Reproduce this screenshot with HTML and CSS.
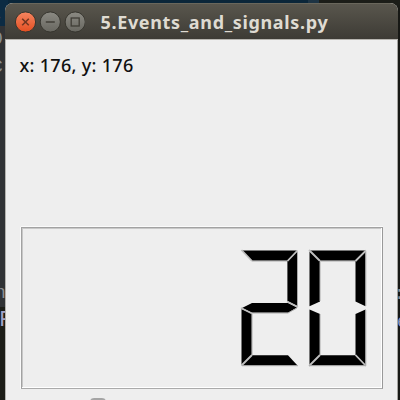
FILE: index.html
```
<!DOCTYPE html>
<html lang="en">
<head>
<meta charset="utf-8">
<title>5.Events_and_signals.py</title>
<link rel="stylesheet" href="styles.css">
</head>
<body>
<div class="desktop">
  <div class="behind left">
    <span class="scrap s1">-:</span>
    <span class="scrap s2">0:</span>
    <span class="scrap s3">C:</span>
    <span class="scrap s4">n</span>
    <span class="scrap s5">F</span>
  </div>
  <div class="behind right">
    <span class="scrap s6">:</span>
    <span class="scrap s7">e</span>
  </div>
  <main class="window">
    <header class="titlebar">
      <svg class="buttons" width="72" height="24" viewBox="0 0 72 24">
        <defs>
          <linearGradient id="red" x2="0" y2="1"><stop offset="0" stop-color="#f58560"/><stop offset="1" stop-color="#e44f22"/></linearGradient>
          <linearGradient id="grey" x2="0" y2="1"><stop offset="0" stop-color="#8b8a83"/><stop offset="1" stop-color="#686760"/></linearGradient>
        </defs>
        <g stroke="#37362f">
          <circle cx="12.5" cy="12" r="10.1" fill="url(#red)"/>
          <circle cx="37.3" cy="12" r="10.1" fill="url(#grey)"/>
          <circle cx="62.2" cy="12" r="10.1" fill="url(#grey)"/>
        </g>
        <g fill="none" stroke="#403e37" stroke-width="1.3">
          <path d="M9.2 8.7l6.6 6.6M15.8 8.7l-6.6 6.6" stroke="#733621" stroke-width="1.6"/>
          <path d="M32.8 12h9"/>
          <rect x="58.2" y="8" width="8" height="8"/>
        </g>
      </svg>
      <h1 class="title">5.Events_and_signals.py</h1>
    </header>
    <section class="content">
      <p class="coords">x: 176, y: 176</p>
      <div class="lcd">
        <svg class="digits" width="128" height="120" viewBox="240 248 128 120">
          <g class="segment">
            <path d="M241.5 250.5H297L287.5 260.8H252z"/>
            <path d="M297.2 251.5V306L287.4 301V261z"/>
            <path d="M242 308L252 303H288L297 307.5L288 312.8H252z"/>
            <path d="M241.5 309L251.8 313.5V355L241.5 365z"/>
            <path d="M241.5 365.5L252 355.3H288L297.5 365.5z"/>
            <path d="M309.5 250.5H365.5L355.5 260.8H320z"/>
            <path d="M309.5 251.5L320 261V301.5L309.5 306.3z"/>
            <path d="M365.5 251.5V306.3L355.5 301.5V261z"/>
            <path d="M309.5 309.5L320 314V355L309.5 365z"/>
            <path d="M365.5 309.5V365L355.5 355V314z"/>
            <path d="M309.5 365.5L320 355.3H355.5L365.5 365.5z"/>
          </g>
          <path class="light" d="M241.5 250L252 261M287.5 261L297.5 250.5M287 301.5L298 307M241 308L252 313.5M241.5 365.5L252 355M309 250L320 261M355.5 261L366 250.5M309 366L320 355M355.5 355L366 366"/>
          <path class="shade" d="M252 261H287M297.5 252V306M251.5 313H288L297 308M252 314V355M242 365.7H298M320 261H355M320 262V301M365.8 252V306M365.8 310V365M320 314V355M309 365.7H366"/>
        </svg>
      </div>
      <span class="handle"></span>
    </section>
  </main>
</div>
</body>
</html>
```

FILE: styles.css
```
* { box-sizing: border-box; }
body { margin: 0; background: #1b1c18; }
.desktop {
  position: relative;
  width: 400px;
  height: 400px;
  overflow: hidden;
  padding: 3px 2px 0 5px;
  background: linear-gradient(90deg, #0b2639 308px, #1e3444 308px 319px, #1c1d18 319px) 0 0 / 100% 5px no-repeat, #1a1b17;
}
.behind { position: absolute; top: 0; bottom: 0; overflow: hidden; }
.left {
  left: 0;
  width: 8px;
  background: linear-gradient(#0c2b43 26px, #303235 26px 307px, #1c1d17 307px);
}
.right { right: 0; top: 8px; width: 3px; background: #171815; }
.scrap {
  position: absolute;
  font: 18px/20px "Liberation Mono", monospace;
  color: #8b8e91;
  white-space: nowrap;
}
.s1 { left: -8px; top: 8px; }
.s2 { left: -8px; top: 29px; }
.s3 { left: -8px; top: 57px; }
.s4 { left: -5px; top: 283px; }
.s5 { left: -1px; top: 311px; color: #a2a3c9; font-size: 22px; }
.s6 { left: -3px; top: 276px; }
.s7 { left: 0; top: 304px; color: #9293be; }
.window {
  position: relative;
  height: 397px;
  border-radius: 8px 8px 0 0;
  overflow: hidden;
  background: #eee;
}
.titlebar {
  display: flex;
  align-items: center;
  height: 37px;
  padding-left: 8px;
  background: linear-gradient(#59564d, #3d3b35);
  border-top: 1px solid #6a675c;
  border-bottom: 1px solid #b7b5b0;
}
.buttons { display: block; flex: none; margin-top: 1px; }
.title {
  margin: 0 0 0 15.5px;
  font: bold 18px/24px "Noto Sans", sans-serif;
  letter-spacing: .66px;
  color: #dfdbd2;
  white-space: nowrap;
}
.content {
  height: 360px;
  padding: 12px 14px 0 15px;
  border-left: 1px solid #b3b2ae;
  border-right: 1px solid #a5a4a0;
}
.coords {
  margin: 0 0 0 -1.5px;
  height: 175px;
  font: 500 18px/26px "Noto Sans", sans-serif;
  letter-spacing: .3px;
  color: #111;
  white-space: nowrap;
}
.lcd {
  display: flex;
  justify-content: flex-end;
  height: 162px;
  padding: 20px 14px 0 0;
  border: 1px solid #a2a2a2;
  border-right-color: #999;
  border-bottom-color: #aaa;
  box-shadow: inset -1px -1px #fff, inset 1px 1px #c8c8c8, 0 -1px #fafafa, -1px 0 #fafafa;
}
.digits { display: block; }
.segment { fill: #000; }
.light, .shade { fill: none; stroke: #aaa; }
.light { stroke: #bebebe; stroke-width: 1.8; }
.handle {
  display: block;
  width: 16px;
  height: 4px;
  margin: 9px 0 0 69px;
  border-radius: 8px 8px 0 0;
  background: #a5a5a5;
}
```
